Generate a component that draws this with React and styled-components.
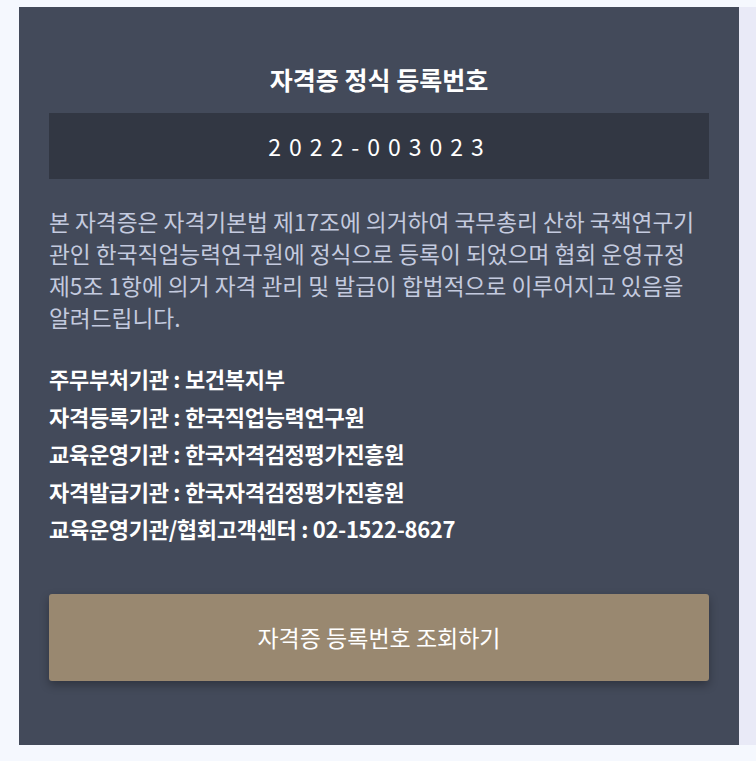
import React from 'react'
import styled, { createGlobalStyle } from 'styled-components'

const GlobalStyle = createGlobalStyle`
    html, body {
        margin: 0;
        padding: 0;
        background: #f5f8fe;
        font-family: "Noto Sans CJK KR", "Noto Sans", sans-serif;
    }
`

const Page = styled.div`
    display: flex;
    align-items: stretch;
    padding: 7px 0 16px 19px;
`

const Panel = styled.section`
    width: 720px;
    flex-shrink: 0;
    box-sizing: border-box;
    background: #434a5a;
    padding: 54px 30px 64px;
`

const Side = styled.div`
    flex: 1;
    background: #e9eaf7;
`

const Title = styled.h2`
    margin: 0 0 15px;
    text-align: center;
    color: #ffffff;
    font-size: 25px;
    font-weight: 700;
    line-height: 37px;
`

const NumberBox = styled.div`
    height: 66px;
    display: flex;
    align-items: center;
    justify-content: center;
    background: #323743;
    color: #ffffff;
    font-size: 23px;
    letter-spacing: 8px;
    padding-left: 2px;
`

const Description = styled.p`
    margin: 27px 0 26px;
    color: #c4cadf;
    font-size: 22.7px;
    line-height: 32px;
`

const InfoList = styled.ul`
    list-style: none;
    margin: 0 0 46px;
    padding: 0;
`

const InfoItem = styled.li`
    color: #ffffff;
    font-size: 22px;
    font-weight: 700;
    line-height: 37.5px;
    letter-spacing: -0.3px;
`

const LookupButton = styled.button`
    display: block;
    width: 100%;
    height: 87px;
    border: none;
    border-radius: 3px;
    background: #998870;
    color: #ffffff;
    font-family: inherit;
    font-size: 23px;
    box-shadow: 0 4px 10px rgba(0, 0, 0, 0.3);
    cursor: pointer;
`

const info = [
    '주무부처기관 : 보건복지부',
    '자격등록기관 : 한국직업능력연구원',
    '교육운영기관 : 한국자격검정평가진흥원',
    '자격발급기관 : 한국자격검정평가진흥원',
    '교육운영기관/협회고객센터 : 02-1522-8627',
]

const App = () => (
    <>
        <GlobalStyle />
        <Page>
            <Panel>
                <Title>자격증 정식 등록번호</Title>
                <NumberBox>2022-003023</NumberBox>
                <Description>
                    본 자격증은 자격기본법 제17조에 의거하여 국무총리 산하 국책연구기관인 한국직업능력연구원에 정식으로 등록이 되었으며 협회 운영규정 제5조 1항에 의거 자격 관리 및 발급이 합법적으로 이루어지고 있음을 알려드립니다.
                </Description>
                <InfoList>
                    {info.map((line) => (
                        <InfoItem key={line}>{line}</InfoItem>
                    ))}
                </InfoList>
                <LookupButton>자격증 등록번호 조회하기</LookupButton>
            </Panel>
            <Side />
        </Page>
    </>
)

export default App
